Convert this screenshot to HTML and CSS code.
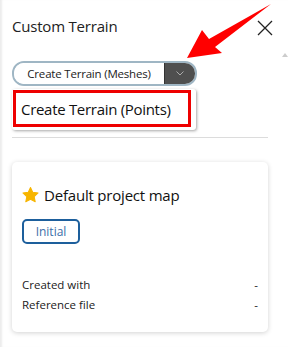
FILE: index.html
```html
<!DOCTYPE html>
<html lang="en">
<head>
    <meta charset="UTF-8">
    <meta name="viewport" content="width=device-width, initial-scale=1.0">
    <title>Custom Terrain</title>
    <link rel="stylesheet" href="styles.css">
</head>
<body>
    <div class="panel">
        <!-- Header -->
        <div class="header">
            <span class="title">Custom Terrain</span>
            <svg class="close" width="16" height="16" viewBox="0 0 16 16">
                <path d="M1 1 L15 15 M15 1 L1 15" stroke="#222" stroke-width="1.3" fill="none"/>
            </svg>
        </div>

        <!-- Select -->
        <div class="select">
            <span class="select-value">Create Terrain (Meshes)</span>
            <span class="select-btn">
                <svg width="8" height="5" viewBox="0 0 8 5">
                    <path d="M0.5 0.5 L4 4 L7.5 0.5" stroke="#aaa" stroke-width="1" fill="none"/>
                </svg>
            </span>
        </div>

        <!-- Opened list -->
        <div class="options">
            <div class="option highlighted">Create Terrain (Points)</div>
        </div>

        <div class="divider"></div>

        <!-- Card -->
        <div class="card">
            <div class="card-title">
                <svg width="17" height="16" viewBox="0 0 24 23">
                    <path d="M12 0.8 L15.3 7.7 L22.9 8.6 L17.3 13.8 L18.8 21.3 L12 17.6 L5.2 21.3 L6.7 13.8 L1.1 8.6 L8.7 7.7 Z" fill="#f7b500" stroke="#f7b500" stroke-width="1.5" stroke-linejoin="round"/>
                </svg>
                <span>Default project map</span>
            </div>
            <button class="tag">Initial</button>
            <div class="info">
                <div class="info-row"><span>Created with</span><span>-</span></div>
                <div class="info-row"><span>Reference file</span><span>-</span></div>
            </div>
        </div>
    </div>

    <!-- Annotation arrow -->
    <svg class="arrow" width="288" height="70" viewBox="0 0 288 70">
        <polygon points="187,58 202,30 209,39 271,4 215,47 222,53" fill="#f00"/>
    </svg>
    <span class="scroll-up"></span>
</body>
</html>
```

FILE: styles.css
```css
body {
    margin: 0;
    font-family: "Open Sans", "Noto Sans", sans-serif;
    background-color: #fff;
    color: #222;
}

.panel {
    width: 256px;
    height: 347px;
    padding: 0 20px 0 12px;
    box-shadow: inset 3px 0 2px -1px #ececec;
}

.header {
    display: flex;
    justify-content: space-between;
    align-items: center;
    padding-top: 15px;
    height: 22px;
}

.title {
    font-size: 15px;
    letter-spacing: -0.2px;
    color: #222;
}

.close {
    margin-right: -5px;
    margin-top: 3px;
}

.select {
    display: flex;
    width: 181px;
    height: 21px;
    margin-top: 24px;
    border: 2px solid #9fb6c4;
    border-radius: 12px;
    overflow: hidden;
}

.select-value {
    flex: 1;
    display: flex;
    align-items: center;
    justify-content: center;
    font-size: 11.5px;
    letter-spacing: -0.2px;
    color: #222;
    background: #fff;
    border-right: 1px solid #333;
}

.select-btn {
    width: 30px;
    display: flex;
    align-items: center;
    justify-content: center;
    background: #4f4f4f;
}

.options {
    width: 184px;
    margin-top: 3px;
    padding: 1px 5px 3px 1px;
    box-sizing: border-box;
    background: #fff;
    border-radius: 3px;
    box-shadow: 1px 1px 3px rgba(0, 0, 0, 0.35);
}

.option {
    height: 31px;
    display: flex;
    align-items: center;
    padding-left: 5px;
    font-size: 15px;
    letter-spacing: -0.3px;
    color: #111;
}

.highlighted {
    border: 3px solid #ee0000;
}

.divider {
    height: 1px;
    margin-top: 7px;
    background: #dcdcdc;
}

.card {
    margin-top: 24px;
    height: 170px;
    padding: 0 10px;
    border-radius: 5px;
    box-shadow: 0 1px 5px rgba(0, 0, 0, 0.18);
    display: flex;
    flex-direction: column;
    align-items: flex-start;
}

.card-title {
    display: flex;
    align-items: center;
    gap: 5px;
    margin-top: 23px;
    font-size: 15px;
    letter-spacing: -0.2px;
    color: #111;
}

.tag {
    margin-top: 14px;
    width: 58px;
    height: 25px;
    padding: 0;
    border: 2px solid #1d5f9c;
    border-radius: 5px;
    background: #fff;
    font-family: inherit;
    font-size: 12px;
    color: #3b6ea8;
}

.info {
    align-self: stretch;
    margin-top: 31px;
    font-size: 11.5px;
    color: #222;
}

.info-row {
    display: flex;
    justify-content: space-between;
    line-height: 20px;
}

.arrow {
    position: absolute;
    left: 0;
    top: 0;
}

.scroll-up {
    position: absolute;
    left: 282px;
    top: 53px;
    border-left: 3px solid transparent;
    border-right: 3px solid transparent;
    border-bottom: 4px solid #ccc;
}
```
